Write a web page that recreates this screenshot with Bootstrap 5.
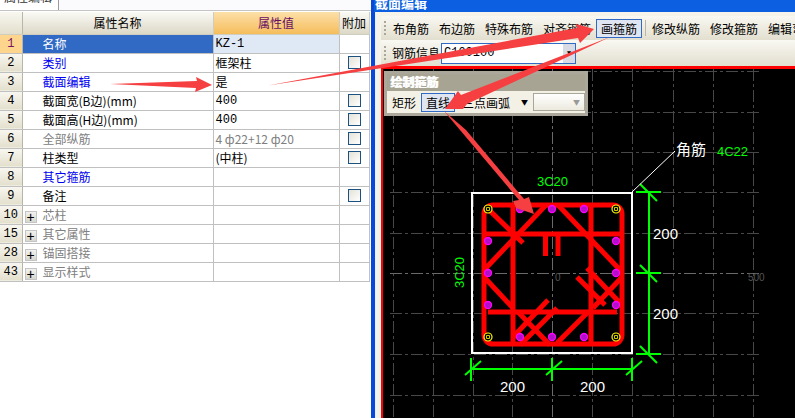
<!DOCTYPE html>
<html lang="zh"><head><meta charset="utf-8"><title>截面编辑</title>
<link href="https://cdn.jsdelivr.net/npm/bootstrap@5.3.0/dist/css/bootstrap.min.css" rel="stylesheet">
<style>
html,body{height:418px;overflow:hidden;margin:0}
body{font:12px/1 "Noto Sans CJK SC","Liberation Sans",sans-serif;color:#000;background:#fff}
.stage{width:795px;height:418px;position:relative;overflow:hidden}
.left-pane{width:371px;flex:none;background:#fff}
.tab-strip{height:11px;overflow:hidden;border-bottom:1px solid #c4c4c4}
.tab-label{width:59px;height:10px;overflow:hidden;border-right:1px solid #9a9a9a;padding-left:4px;color:#333}
.tab-label span{display:block;margin-top:-9px;line-height:12px}
.tab-field{background:#fbfbfd}
.prop-grid{border-collapse:collapse;table-layout:fixed;width:369px;margin-top:1px}
.prop-grid td,.prop-grid th{height:19px;padding:0;border:1px solid #c0c0c0;border-left-width:0;border-top-width:0;border-bottom-width:1px;font-weight:400;white-space:nowrap;overflow:hidden;vertical-align:middle;line-height:18px;border-right-width:1px}
.prop-grid thead th{height:22px;background:linear-gradient(#fafaf5,#dcd8c7);text-align:center;border-color:#cfcdbf}
.prop-grid thead th.val-head{background:linear-gradient(#fcdfa8,#f5bd5b);color:#660e66}
.prop-grid .num{background:linear-gradient(#f8f7f0,#e3dfcd);text-align:center;font-family:"Liberation Mono",monospace;border-right:1px solid #b8b6a8}
.prop-grid .num.on{background:#fdd58c;color:#7a1266}
.prop-grid .nm{padding-left:20px}
.prop-grid .nm.sel{background:#316ac5;color:#fff}
.prop-grid .vl{padding-left:2px}
.prop-grid .vl.sel{background:#dfe8f5;font-family:"Liberation Mono",monospace}
.latin{font-family:"Liberation Mono",monospace}
.link-blue{color:#0000f0}
.muted-gray{color:#808080}
.add-cell{text-align:center}
.tick-box{appearance:none;display:block;width:13px;height:13px;margin:0 auto 0 8px;border:1px solid #1c5180;background:linear-gradient(135deg,#e4e2d6,#fff)}
.plus-box{display:inline-block;width:12px;height:12px;margin:0 6px 0 2px;border:1px solid #c4c4c4;background:linear-gradient(#f2f2ee,#d8d8d2);color:#000;text-align:center;font:14px/10px "Liberation Sans",sans-serif;vertical-align:-2px}
.win-pane{background:#ece9d8;border-left:4px solid #0a48d6;min-width:0}
.win-title{height:12px;background:#0b5fe0;overflow:hidden;color:#fff;font-weight:700;font-size:13px;line-height:10px;padding-left:1px;margin-left:-1px;flex:none}
.win-title span{display:block;margin-top:-4px;line-height:14px}
.win-inner{padding:4px 0 0 5px;min-height:0;border-left:1px solid #e8f0fa;background:#f6f4ea}
.tool-row{height:24px;background:linear-gradient(#f9f8f2,#e2dfcf);white-space:nowrap;padding-left:3px;flex:none}
.tool-row.second{height:26px}
.grip{width:2px;height:14px;margin-right:2px;flex:none;background:repeating-linear-gradient(#aaa69a 0 2px,transparent 2px 4px)}
.tool-item{padding:0 4px;line-height:17px;border:1px solid transparent;flex:none}
.tool-item.active{background:#dfe5f1;border-color:#316ac5}
.tool-sep{width:1px;height:16px;background:#b8b6a8;margin:0 1px 0 3px;flex:none}
.info-label{margin-left:4px}
.combo{width:135px;height:21px;border:1px solid #316ac5;background:#fff;margin-left:1px;font:12px/18px "Liberation Mono",monospace;padding-left:2px}
.combo-btn{width:12px;height:19px;background:#d8dae4;text-align:center;font-size:7px;line-height:19px}
.canvas-wrap{position:relative;flex:1;background:#000;border-top:3px solid #f00;border-left:2px solid #f00;min-height:0}
.canvas-svg{display:block;width:412px;height:349px}
.float-panel{position:absolute;left:1px;top:2px;width:204px;height:45px;border:3px solid #aba79a;background:#f3f1e6}
.float-head{height:17px;background:#a8a494;color:#fff;font-weight:700;font-size:12px;line-height:16px;padding-left:3px;text-shadow:1px 0 0 #fff}
.float-body{height:22px}
.float-item{line-height:17px;padding:0 4px;border:1px solid transparent;flex:none}
.float-item.active{background:#dfe5f1;border-color:#316ac5;margin-right:2px}
.mini-select{width:56px;height:18px;margin-left:5px;border:1px solid #aaa79a;background:linear-gradient(#fff,#eceade);color:#999;font-size:7px;line-height:16px;text-align:right;padding-right:4px}
.caret-mark{font-size:7px;margin-left:6px}
.arrow-layer{position:absolute;left:0;top:0;width:795px;height:418px;pointer-events:none}
svg text{font-family:"Liberation Sans",sans-serif}
</style></head>
<body>
<div class="stage d-flex">
  <div class="left-pane">
    <div class="tab-strip d-flex"><div class="tab-label"><span>属性编辑</span></div><div class="tab-field flex-grow-1"></div></div>
    <table class="prop-grid">
      <colgroup><col style="width:22px"><col style="width:191px"><col style="width:126px"><col style="width:30px"></colgroup>
      <thead><tr><th class="num"></th><th>属性名称</th><th class="val-head">属性值</th><th>附加</th></tr></thead>
      <tbody>
      <tr><td class="num on">1</td><td class="nm sel">名称</td><td class="vl sel">KZ-1</td><td class="add-cell"></td></tr>
      <tr><td class="num">2</td><td class="nm link-blue">类别</td><td class="vl">框架柱</td><td class="add-cell"><input type="checkbox" class="tick-box"></td></tr>
      <tr><td class="num">3</td><td class="nm link-blue">截面编辑</td><td class="vl">是</td><td class="add-cell"></td></tr>
      <tr><td class="num">4</td><td class="nm">截面宽(B边)(mm)</td><td class="vl latin">400</td><td class="add-cell"><input type="checkbox" class="tick-box"></td></tr>
      <tr><td class="num">5</td><td class="nm">截面高(H边)(mm)</td><td class="vl latin">400</td><td class="add-cell"><input type="checkbox" class="tick-box"></td></tr>
      <tr><td class="num">6</td><td class="nm muted-gray">全部纵筋</td><td class="vl muted-gray">4 ф22+12 ф20</td><td class="add-cell"><input type="checkbox" class="tick-box"></td></tr>
      <tr><td class="num">7</td><td class="nm">柱类型</td><td class="vl">(中柱)</td><td class="add-cell"><input type="checkbox" class="tick-box"></td></tr>
      <tr><td class="num">8</td><td class="nm link-blue">其它箍筋</td><td class="vl"></td><td class="add-cell"></td></tr>
      <tr><td class="num">9</td><td class="nm">备注</td><td class="vl"></td><td class="add-cell"><input type="checkbox" class="tick-box"></td></tr>
      <tr><td class="num">10</td><td class="muted-gray"><span class="plus-box">+</span>芯柱</td><td></td><td></td></tr>
      <tr><td class="num">15</td><td class="muted-gray"><span class="plus-box">+</span>其它属性</td><td></td><td></td></tr>
      <tr><td class="num">28</td><td class="muted-gray"><span class="plus-box">+</span>锚固搭接</td><td></td><td></td></tr>
      <tr><td class="num">43</td><td class="muted-gray"><span class="plus-box">+</span>显示样式</td><td></td><td></td></tr>
      </tbody>
    </table>
  </div>
  <div class="win-pane flex-grow-1 d-flex flex-column">
    <div class="win-title"><span>截面编辑</span></div>
    <div class="win-inner flex-grow-1 d-flex flex-column">
      <div class="tool-row d-flex align-items-center">
        <div class="grip"></div>
        <div class="tool-item">布角筋</div><div class="tool-item">布边筋</div><div class="tool-item">特殊布筋</div><div class="tool-item">对齐钢筋</div><div class="tool-item active">画箍筋</div>
        <div class="tool-sep"></div>
        <div class="tool-item">修改纵筋</div><div class="tool-item">修改箍筋</div><div class="tool-item">编辑弯钩</div>
      </div>
      <div class="tool-row second d-flex align-items-center">
        <div class="grip"></div>
        <div class="info-label">钢筋信息</div>
        <div class="combo d-flex justify-content-between"><span>C100100</span><span class="combo-btn">▼</span></div>
      </div>
      <div class="canvas-wrap">
        <svg class="canvas-svg" viewBox="383 69 412 349" xmlns="http://www.w3.org/2000/svg">
          <g stroke="#484848" stroke-width="1" fill="none" stroke-dasharray="12 3 3 3">
            <path d="M393.500 69V418M433.500 69V418M473.500 69V418M512.500 69V418M592.500 69V418M632.500 69V418M673.500 69V418M713.500 69V418M753.500 69V418"/>
            <path d="M390 71.500H760M390 112.500H760M390 152.500H760M390 192.500H760M390 233.500H760M390 313.500H760M390 354.500H760M390 395.500H760"/>
            <path stroke="#6a6a6a" d="M390 273.500H760M552.500 69V418"/>
          </g>
          <text x="555" y="281" fill="#555" font-size="10">0</text>
          <text x="748" y="281" fill="#555" font-size="10">500</text>
          <g fill="none" stroke="#f00" stroke-width="5">
            <rect x="484" y="205" width="138" height="139" rx="9"/>
            <path d="M484 234H622M488 312H617M513 203V344M591 203V344M545.500 234V256M558 234V256"/>
            <path d="M546 205L484 270M486 207L523 243M484 277L513 308M558 205L622 272M622 277L593 308M587 268L620 303M577 277L605 305M588 312L557 343M548 300L513 337M557 308L520 345M518 312L550 345"/>
          </g>
          <rect x="472" y="193" width="160" height="160" fill="none" stroke="#fff" stroke-width="2"/>
          <g fill="#b010c8" stroke="#f0f" stroke-width="1.300">
            <circle cx="520" cy="209" r="3.500"/><circle cx="552" cy="209" r="3.500"/><circle cx="584" cy="209" r="3.500"/>
            <circle cx="488" cy="241" r="3.500"/><circle cx="488" cy="273" r="3.500"/><circle cx="488" cy="305" r="3.500"/>
            <circle cx="616" cy="241" r="3.500"/><circle cx="616" cy="273" r="3.500"/><circle cx="616" cy="305" r="3.500"/>
            <circle cx="520" cy="337" r="3.500"/><circle cx="552" cy="337" r="3.500"/><circle cx="584" cy="337" r="3.500"/>
          </g>
          <g fill="#000" stroke="#ff0" stroke-width="1.200">
            <circle cx="488" cy="209" r="4"/><circle cx="616" cy="209" r="4"/><circle cx="488" cy="337" r="4"/><circle cx="616" cy="337" r="4"/>
            <path d="M486.500 207.500h3v3h-3zM614.500 207.500h3v3h-3zM486.500 335.500h3v3h-3zM614.500 335.500h3v3h-3z" stroke-width="0.800"/>
          </g>
          <g fill="none" stroke="#0f0" stroke-width="2">
            <path d="M649 192V354M636 192H661M636 273H661M636 354H661M640 184L657 201M640 265L657 282M640 346L657 363"/>
            <path d="M471 369H632M471 358V381M552 358V381M632 358V381M465 375L481 361M546 375L562 361M626 375L642 361"/>
          </g>
          <path d="M632 192L675 151" stroke="#fff" stroke-width="1"/>
          <g font-size="15" fill="#fff">
            <text x="653" y="239">200</text><text x="653" y="319">200</text>
            <text x="500" y="392">200</text><text x="580" y="392">200</text>
          </g>
          <g font-size="13" fill="#0f0">
            <text x="537" y="186">3C20</text>
            <text x="717" y="156">4C22</text>
            <text transform="translate(464 288) rotate(-90)">3C20</text>
          </g>
          <text x="676" y="155" font-size="15" fill="#fff" style="font-family:'Noto Sans CJK SC',sans-serif">角筋</text>
        </svg>
        <div class="float-panel">
          <div class="float-head">绘制箍筋</div>
          <div class="float-body d-flex align-items-center">
            <div class="float-item">矩形</div>
            <div class="float-item active">直线</div>
            <div class="float-item">三点画弧</div>
            <span class="caret-mark">▼</span>
            <div class="mini-select">▼</div>
          </div>
        </div>
      </div>
    </div>
  </div>
  <svg class="arrow-layer" viewBox="0 0 795 418" xmlns="http://www.w3.org/2000/svg">
    <g fill="#f63f40">
      <polygon points="110,84 197,81 196,77 212,85 195,92 196,88"/>
      <polygon points="268,85.500 578,38 580,43 594,29 576,24 577,28"/>
      <polygon points="610,37 467,104 463,109 445,109 458,91 461,95"/>
      <polygon points="444,111 466,130 524,199 529,197 534,214 516,208 513,201 519,200 460,130"/>
    </g>
  </svg>
</div>
</body></html>
